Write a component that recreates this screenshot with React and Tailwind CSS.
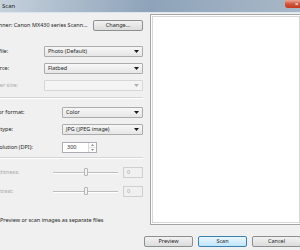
import React from 'react';

const font = { fontFamily: '"Noto Sans", "Liberation Sans", sans-serif' };

const Arrow = ({ disabled }) => (
  <svg width="5" height="3" viewBox="0 0 5 3" className="shrink-0">
    <path d="M0 0h5L2.5 3z" fill={disabled ? '#b0b0b0' : '#1a1a1a'} />
  </svg>
);

const Select = ({ value, disabled }) => (
  <div
    className={`flex-1 h-[11px] flex items-center justify-between pl-[3px] pr-[3px] rounded-[1px] border ${
      disabled
        ? 'border-[#d6d6d6] bg-[#f4f4f4]'
        : 'border-[#acacac] bg-gradient-to-b from-[#f7f7f7] to-[#e6e6e6]'
    }`}
  >
    <span className="text-[#1e1e1e] leading-none">{value}</span>
    <Arrow disabled={disabled} />
  </div>
);

const Row = ({ label, labelWidth, disabled, children, className = '' }) => (
  <div className={`flex items-center ${className}`}>
    <span
      className={`shrink-0 leading-none ${disabled ? 'text-[#a8a8a8]' : 'text-[#1e1e1e]'}`}
      style={{ width: labelWidth }}
    >
      {label}
    </span>
    {children}
  </div>
);

const Separator = ({ className = '' }) => (
  <div className={`flex flex-col ${className}`}>
    <div className="h-px bg-[#d5d5d5]" />
    <div className="h-px bg-white" />
  </div>
);

const Slider = () => (
  <div className="flex-1 relative h-[11px] flex items-center px-[2px]">
    <div className="flex-1 flex flex-col">
      <div className="h-px bg-[#bdbdbd]" />
      <div className="h-px bg-white" />
    </div>
    <div className="absolute left-1/2 top-[1px] -translate-x-1/2 w-[4px] h-[8px] rounded-[1px] border border-[#b5b5b5] bg-[#f4f4f4]" />
  </div>
);

const NumBox = () => (
  <div className="w-[20px] h-[11px] shrink-0 ml-[3px] border border-[#cfcfcf] bg-[#f0f0f0] flex items-center pl-[3px] text-[#a8a8a8] leading-none">
    0
  </div>
);

const Button = ({ children, primary, className = '' }) => (
  <div
    className={`h-[11px] flex items-center justify-center rounded-[2px] border leading-none text-[#1e1e1e] ${
      primary
        ? 'border-[#3c7fb1] bg-gradient-to-b from-[#eaf6fd] to-[#bee6fd]'
        : 'border-[#8e8f8f] bg-gradient-to-b from-[#f2f2f2] to-[#dcdcdc]'
    } ${className}`}
  >
    {children}
  </div>
);

export default function App() {
  return (
    <div className="w-[300px] h-[250px] bg-[#f0f0f0] overflow-hidden flex flex-col text-[5.5px]" style={font}>
      {/* Title bar */}
      <div className="h-[13px] shrink-0 flex justify-between bg-gradient-to-r from-[#c6d1dc] via-[#8ea3b9] to-[#a9b8c8] border-b border-[#dde4eb]">
        <span className="pl-[2px] pt-[3px] text-[#1e1e1e] leading-none text-[6px]">Scan</span>
        <div className="w-[22px] h-[8px] mr-[-7px] rounded-bl-[3px] bg-gradient-to-b from-[#e9a99b] via-[#d0553c] to-[#c23a1f] flex items-center pl-[10px]">
          <span className="text-white text-[6px] leading-none font-bold">×</span>
        </div>
      </div>

      {/* Body */}
      <div className="flex h-[213px] shrink-0">
        <div className="w-[153px] ml-[-10px] shrink-0 flex flex-col">
          <div className="flex items-center justify-between mt-[7px]">
            <span className="leading-none text-[#1e1e1e]">Scanner: Canon MX430 series Scann...</span>
            <Button className="w-[50px]">Change...</Button>
          </div>

          <Row label="Profile:" labelWidth={54} className="mt-[15px]">
            <Select value="Photo (Default)" />
          </Row>
          <Row label="Source:" labelWidth={54} className="mt-[6px]">
            <Select value="Flatbed" />
          </Row>
          <Row label="Paper size:" labelWidth={54} disabled className="mt-[6px]">
            <Select value="" disabled />
          </Row>

          <Separator className="mt-[6px]" />

          <Row label="Color format:" labelWidth={72} className="mt-[8px]">
            <Select value="Color" />
          </Row>
          <Row label="File type:" labelWidth={72} className="mt-[6px]">
            <Select value="JPG (JPEG image)" />
          </Row>
          <Row label="Resolution (DPI):" labelWidth={72} className="mt-[7px]">
            <div className="w-[35px] h-[11px] border border-[#abadb3] bg-white flex items-center justify-between pl-[4px]">
              <span className="leading-none text-[#1e1e1e]">300</span>
              <div className="w-[8px] h-full flex flex-col border-l border-[#d9d9d9]">
                <div className="flex-1 flex items-center justify-center">
                  <svg width="3" height="2" viewBox="0 0 3 2"><path d="M0 2h3L1.5 0z" fill="#8a8a8a" /></svg>
                </div>
                <div className="flex-1 flex items-center justify-center border-t border-[#e2e2e2]">
                  <svg width="3" height="2" viewBox="0 0 3 2"><path d="M0 0h3L1.5 2z" fill="#8a8a8a" /></svg>
                </div>
              </div>
            </div>
          </Row>

          <Separator className="mt-[4px]" />

          <Row label="Brightness:" labelWidth={61} disabled className="mt-[8px]">
            <Slider />
            <NumBox />
          </Row>
          <Row label="Contrast:" labelWidth={61} disabled className="mt-[8px]">
            <Slider />
            <NumBox />
          </Row>

          <div className="flex items-center gap-[4px] mt-[21px]">
            <div className="w-[6px] h-[6px] border border-[#8f8f8f] bg-white shrink-0" />
            <span className="leading-none text-[#1e1e1e]">Preview or scan images as separate files</span>
          </div>
        </div>

        {/* Preview pane */}
        <div className="w-[152px] shrink-0 ml-[7px] mt-[1px] h-[211px] border border-[#a5a5a5] bg-white p-px">
          <div className="h-full border border-[#d6d6d6] bg-white" />
        </div>
      </div>

      {/* Buttons */}
      <div className="flex justify-end gap-[5px] mt-[10px] mr-[-1px]">
        <Button className="w-[49px]">Preview</Button>
        <Button className="w-[49px]" primary>Scan</Button>
        <Button className="w-[49px]">Cancel</Button>
      </div>
    </div>
  );
}
